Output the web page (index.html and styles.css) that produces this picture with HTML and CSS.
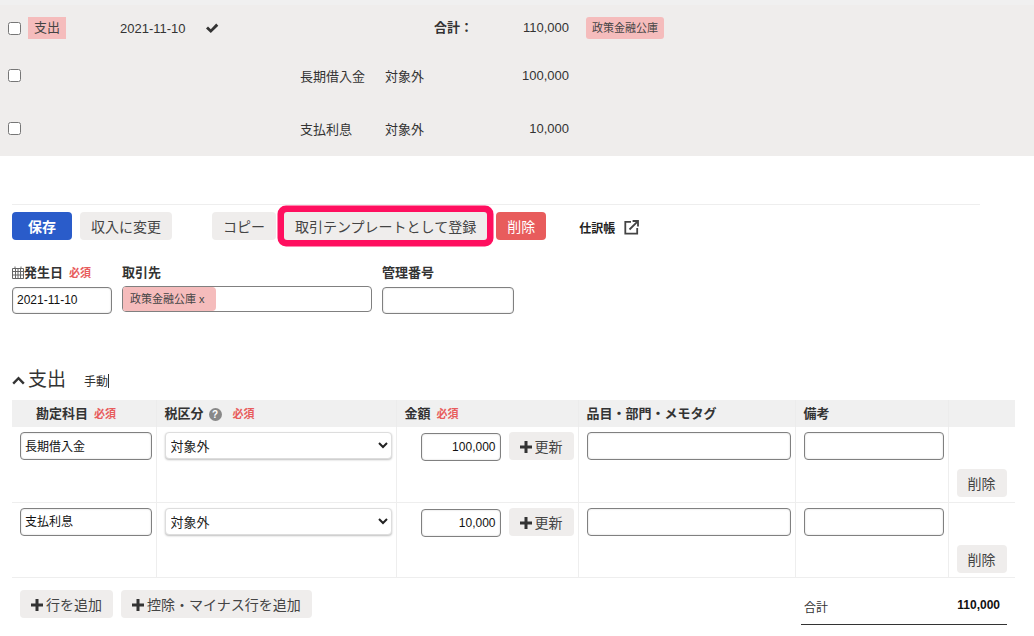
FILE: index.html
```html
<!DOCTYPE html>
<html lang="ja">

<head>
  <meta charset="UTF-8">
  <title>取引の編集</title>
  <link rel="stylesheet" href="styles.css">
</head>

<body>
  <div class="journal-list">
    <div class="journal-row row-head">
      <input type="checkbox" class="row-check">
      <span class="type-tag">支出</span>
      <span>2021-11-10</span>
      <svg class="check-mark" width="14" height="12" viewBox="0 0 14 12"><path d="M1 6.5l2-2 2.8 2.7L11.2 1.6 13.3 3.7 5.8 11z" fill="#333"/></svg>
      <span></span>
      <b class="total-label">合計：</b>
      <span class="amount">110,000</span>
      <span class="partner-tag">政策金融公庫</span>
    </div>
    <div class="journal-row row-second">
      <input type="checkbox" class="row-check">
      <span></span>
      <span></span>
      <span></span>
      <span>長期借入金</span>
      <span>対象外</span>
      <span class="amount">100,000</span>
    </div>
    <div class="journal-row row-third">
      <input type="checkbox" class="row-check">
      <span></span>
      <span></span>
      <span></span>
      <span>支払利息</span>
      <span>対象外</span>
      <span class="amount">10,000</span>
    </div>
  </div>

  <div class="editor">
    <div class="actions">
      <button class="btn btn-primary">保存</button>
      <button class="btn btn-spaced">収入に変更</button>
      <button class="btn">コピー</button>
      <button class="btn btn-marked">取引テンプレートとして登録</button>
      <button class="btn btn-danger">削除</button>
      <a class="ledger-link" href="#">仕訳帳
        <svg width="15" height="15" viewBox="0 0 15 15" fill="none" stroke="#444" stroke-width="1.8"><path d="M7 1.8H1.3v11.9h11.9V8"/><path d="M5.5 9.5L13.2 1.8M8.6 1h5.4v5.4" /></svg>
      </a>
    </div>

    <div class="fields">
      <div class="field field-date">
        <label><svg class="calendar" width="12" height="13" viewBox="0 0 12 13" fill="none" stroke="#666" stroke-width="1"><path d="M.5 2.5h11v10H.5zM.5 5.5h11M.5 9h11M3.5 2.5v10M6 2.5v10M8.5 2.5v10M3 .5v2M9 .5v2"/></svg>発生日<em class="required">必須</em></label>
        <input type="text" class="text-input" value="2021-11-10">
      </div>
      <div class="field field-partner">
        <label>取引先</label>
        <div class="partner-box"><span class="partner-chip">政策金融公庫 <span class="chip-x">x</span></span></div>
      </div>
      <div class="field field-number">
        <label>管理番号</label>
        <input type="text" class="text-input">
      </div>
    </div>

    <div class="section-head">
      <svg class="chevron" width="13" height="9" viewBox="0 0 13 9" fill="none" stroke="#333" stroke-width="2.4"><path d="M1.2 7.6L6.5 2.2l5.3 5.4"/></svg>
      <h2>支出</h2>
      <span class="mode">手動<i class="caret"></i></span>
    </div>

    <table class="detail-table">
      <thead>
        <tr>
          <th class="col-account">勘定科目<em class="required">必須</em></th>
          <th class="col-tax">税区分<span class="help">?</span><em class="required req-wide">必須</em></th>
          <th class="col-amount">金額<em class="required">必須</em></th>
          <th class="col-tags">品目・部門・メモタグ</th>
          <th class="col-memo">備考</th>
          <th class="col-del"></th>
        </tr>
      </thead>
      <tbody>
        <tr>
          <td class="col-account"><input type="text" class="text-input" value="長期借入金"></td>
          <td class="col-tax"><select class="tax-select"><option>対象外</option></select></td>
          <td class="col-amount">
            <div class="amount-cell">
              <input type="text" class="text-input amount-input" value="100,000">
              <button class="btn btn-update"><svg class="plus" width="12" height="12" viewBox="0 0 12 12"><path d="M4.5 0h3v4.5H12v3H7.5V12h-3V7.5H0v-3h4.5z" fill="#333"/></svg>更新</button>
            </div>
          </td>
          <td class="col-tags"><input type="text" class="text-input"></td>
          <td class="col-memo"><input type="text" class="text-input"></td>
          <td class="col-del"><button class="btn btn-del">削除</button></td>
        </tr>
        <tr>
          <td class="col-account"><input type="text" class="text-input" value="支払利息"></td>
          <td class="col-tax"><select class="tax-select"><option>対象外</option></select></td>
          <td class="col-amount">
            <div class="amount-cell">
              <input type="text" class="text-input amount-input" value="10,000">
              <button class="btn btn-update"><svg class="plus" width="12" height="12" viewBox="0 0 12 12"><path d="M4.5 0h3v4.5H12v3H7.5V12h-3V7.5H0v-3h4.5z" fill="#333"/></svg>更新</button>
            </div>
          </td>
          <td class="col-tags"><input type="text" class="text-input"></td>
          <td class="col-memo"><input type="text" class="text-input"></td>
          <td class="col-del"><button class="btn btn-del">削除</button></td>
        </tr>
      </tbody>
    </table>

    <div class="table-foot">
      <div class="add-buttons">
        <button class="btn"><svg class="plus" width="12" height="12" viewBox="0 0 12 12"><path d="M4.5 0h3v4.5H12v3H7.5V12h-3V7.5H0v-3h4.5z" fill="#333"/></svg>行を追加</button>
        <button class="btn"><svg class="plus" width="12" height="12" viewBox="0 0 12 12"><path d="M4.5 0h3v4.5H12v3H7.5V12h-3V7.5H0v-3h4.5z" fill="#333"/></svg>控除・マイナス行を追加</button>
      </div>
      <div class="grand-total">
        <span>合計</span>
        <b>110,000</b>
      </div>
    </div>
  </div>
</body>

</html>
```

FILE: styles.css
```css
/* 取引編集画面 */
html,
body {
  margin: 0;
  height: 636px;
  overflow: hidden;
}

body {
  font-family: "Liberation Sans", "Noto Sans CJK JP", sans-serif;
  font-size: 13px;
  color: #333;
  background-color: #fff;
}

button,
input,
select {
  font-family: inherit;
}

/* 一覧 */
.journal-list {
  background-color: #efedec;
  border-top: 5px solid #f0f0f0;
  height: 151px;
}

.journal-row {
  display: grid;
  grid-template-columns: 28px 92px 85px 95px 85px 115px 69px auto;
  justify-content: start;
  align-items: center;
  justify-items: start;
}

.row-head {
  height: 46px;
}

.row-second {
  height: 49px;
}

.row-third {
  height: 56px;
}

.row-check {
  width: 13px;
  height: 13px;
  margin: 0 0 0 8px;
}

.type-tag {
  background-color: #f5bcbc;
  color: #444;
  padding: 0 6px;
  line-height: 22px;
}

.check-mark {
  display: block;
}

.total-label {
  margin: 0 0 3px 49px;
  font-weight: bold;
}

.amount {
  justify-self: end;
}

.row-head .amount {
  margin-bottom: 1px;
}

.partner-tag {
  margin-left: 17px;
  background-color: #f5bcbc;
  border-radius: 3px;
  color: #444;
  font-size: 11px;
  padding: 0 6px;
  line-height: 22px;
}

/* 編集フォーム */
.editor {
  padding: 48px 19px 0 12px;
}

.actions {
  display: flex;
  align-items: center;
  gap: 8px;
  width: 968px;
  border-top: 1px solid #eee;
  padding-top: 7px;
}

.btn {
  height: 28px;
  padding: 0 11px;
  border: none;
  border-radius: 4px;
  background-color: #efedec;
  color: #444;
  font-size: 14px;
  white-space: nowrap;
}

.btn-primary {
  width: 60px;
  padding: 0;
  background-color: #2a5cca;
  color: #fff;
  font-weight: bold;
}

.btn-spaced {
  margin-right: 32px;
}

.btn-marked {
  box-shadow: 0 0 0 6.5px #ff0f5f;
  border-radius: 3px;
}

.btn-danger {
  margin-left: 1px;
  background-color: #e85c5c;
  color: #fff;
}

.ledger-link {
  display: flex;
  align-items: center;
  gap: 9px;
  margin: 2px 0 0 25px;
  color: #222;
  font-size: 12px;
  font-weight: bold;
  text-decoration: none;
}

.fields {
  display: flex;
  gap: 10px;
  margin-top: 25px;
}

.field label {
  display: block;
  height: 22px;
  font-size: 13px;
  font-weight: bold;
  line-height: 15px;
}

.field-date {
  width: 100px;
}

.field-partner {
  width: 250px;
}

.field-number {
  width: 132px;
}

.calendar {
  vertical-align: -2px;
}

.required {
  margin-left: 6px;
  color: #e85c5c;
  font-size: 11px;
  font-style: normal;
  font-weight: bold;
}

.text-input {
  display: block;
  box-sizing: border-box;
  width: 100%;
  height: 27px;
  padding: 0 4px 2px;
  border: 1px solid #808080;
  border-radius: 4px;
  box-shadow: inset 0 0 2px rgba(0, 0, 0, 0.2);
  color: #111;
  font-size: 12px;
}

.partner-box {
  box-sizing: border-box;
  height: 26px;
  margin-top: -1px;
  border: 1px solid #808080;
  border-radius: 4px;
}

.partner-chip {
  display: inline-block;
  box-sizing: border-box;
  width: 93px;
  height: 24px;
  padding: 0 7px;
  background-color: #f5bcbc;
  border-radius: 2px 4px 4px 2px;
  color: #444;
  font-size: 11px;
  line-height: 24px;
  white-space: nowrap;
}

/* 明細 */
.section-head {
  display: flex;
  align-items: center;
  height: 30px;
  margin-top: 49px;
}

.chevron {
  margin-top: 4px;
}

.section-head h2 {
  margin: -2px 18px 0 3px;
  font-size: 19px;
  font-weight: normal;
}

.mode {
  margin-top: 5px;
  font-size: 12px;
}

.caret {
  display: inline-block;
  width: 1px;
  height: 14px;
  background-color: #333;
  vertical-align: -2px;
}

.detail-table {
  width: 1003px;
  margin-top: 7px;
  border-collapse: collapse;
  table-layout: fixed;
}

.detail-table th,
.detail-table td {
  box-sizing: border-box;
}

.detail-table th {
  height: 27px;
  padding: 0 8px 3px;
  background-color: #f0f0f0;
  border-right: 1px solid #ececec;
  font-size: 13px;
  text-align: left;
}

.detail-table td {
  height: 75px;
  padding: 5px 8px 0;
  border-right: 1px solid #eee;
  border-bottom: 1px solid #eee;
  vertical-align: top;
}

.detail-table th:last-child,
.detail-table td:last-child {
  border-right: none;
}

.col-account {
  width: 144px;
}

th.col-account {
  padding-left: 24px;
}

.detail-table td.col-account,
.detail-table td.col-tags,
.detail-table td.col-memo {
  padding-right: 4px;
}

.col-tax {
  width: 240px;
}

.col-amount {
  width: 182px;
}

.col-tags {
  width: 217px;
}

.col-memo {
  width: 153px;
}

.tax-select {
  display: block;
  width: 227px;
  height: 27px;
  padding: 2px 0 0 1px;
  border: 1px solid #ddd;
  border-radius: 4px;
  background-color: #fff;
  box-shadow: 0 1px 2px rgba(0, 0, 0, 0.25);
  color: #222;
  font-size: 13px;
}

.help {
  display: inline-block;
  width: 13px;
  height: 13px;
  margin-left: 5px;
  border-radius: 50%;
  background-color: #888;
  color: #fff;
  font-size: 10px;
  line-height: 13px;
  text-align: center;
}

.req-wide {
  margin-left: 11px;
}

.amount-cell {
  display: flex;
  align-items: flex-start;
  gap: 8px;
  margin-left: 16px;
  margin-right: -4px;
}

.amount-input {
  flex: none;
  width: 80px;
  height: 28px;
  margin-top: 1px;
  padding-bottom: 0;
  text-align: right;
}

.col-account .text-input,
.col-tags .text-input,
.col-memo .text-input {
  height: 28px;
}

.btn-update {
  flex: none;
  width: 65px;
  padding: 0;
}

.plus {
  margin-right: 3px;
  vertical-align: -1px;
}

.btn-del {
  display: block;
  width: 50px;
  margin-top: 37px;
  padding: 0;
}

.table-foot {
  display: flex;
  justify-content: space-between;
  width: 987px;
  padding-left: 8px;
  margin-top: 12px;
}

.add-buttons {
  display: flex;
  gap: 8px;
  height: 28px;
}

.grand-total {
  display: flex;
  justify-content: space-between;
  box-sizing: border-box;
  width: 206px;
  height: 35px;
  padding: 8px 7px 0 3px;
  border-bottom: 1px solid #333;
  font-size: 12px;
}

.grand-total b {
  color: #111;
}
```
